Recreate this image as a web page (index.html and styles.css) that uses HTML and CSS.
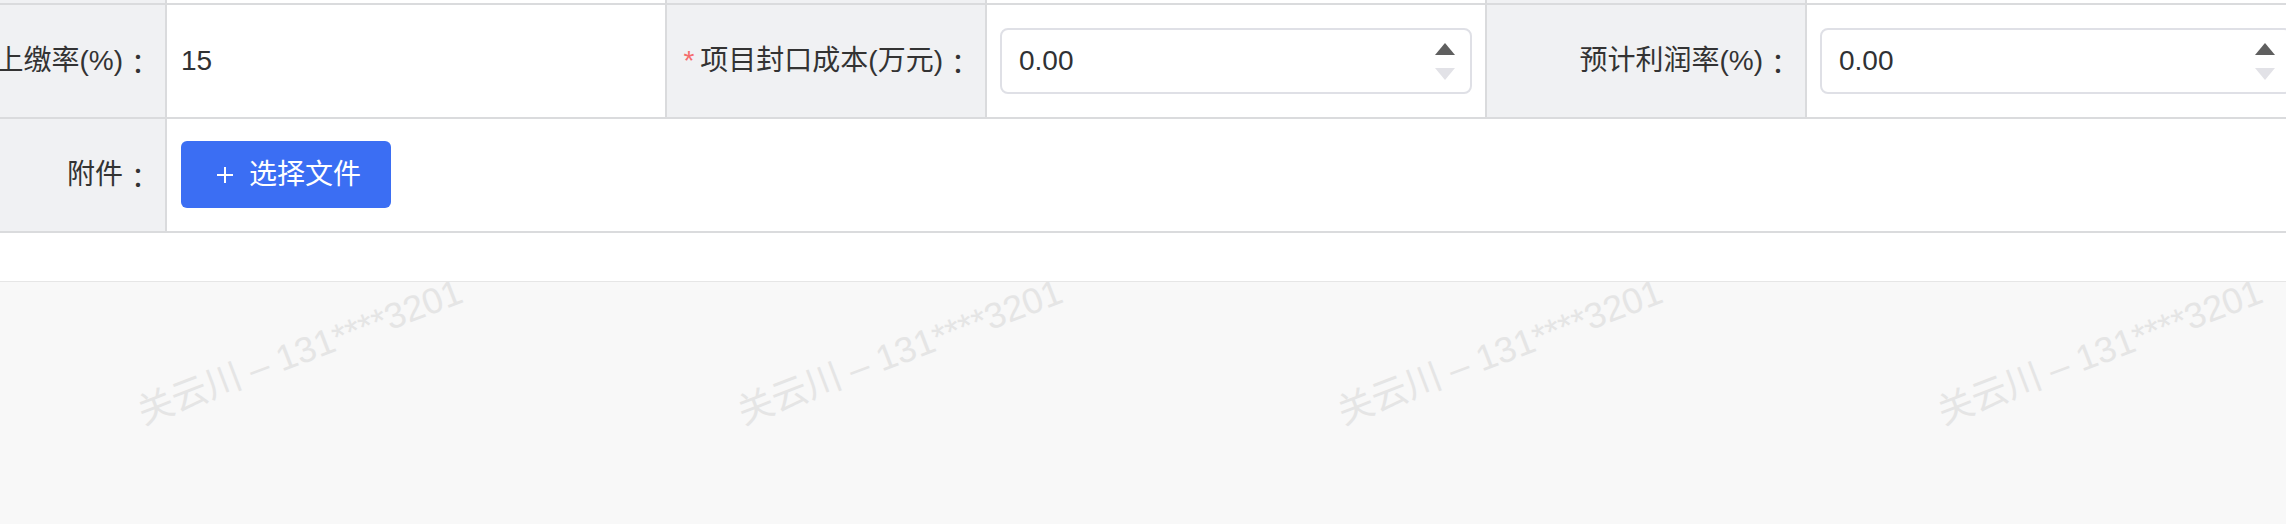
FILE: index.html
```html
<!DOCTYPE html>
<html lang="zh-CN">
<head>
<meta charset="utf-8">
<title>表单</title>
<link rel="stylesheet" href="styles.css">
</head>
<body>
<div class="page">
  <div class="card">
    <div class="grid">
      <div class="cell label"></div>
      <div class="cell value"></div>
      <div class="cell label"></div>
      <div class="cell value"></div>
      <div class="cell label"></div>
      <div class="cell value"></div>

      <div class="cell label">上缴率(%)<span class="colon">：</span></div>
      <div class="cell value"><span class="text">15</span></div>
      <div class="cell label"><span class="req">*</span>项目封口成本(万元)<span class="colon">：</span></div>
      <div class="cell value">
        <div class="num-input">
          <span class="num-val">0.00</span>
          <span class="spin"><span class="up"></span><span class="down"></span></span>
        </div>
      </div>
      <div class="cell label">预计利润率(%)<span class="colon">：</span></div>
      <div class="cell value">
        <div class="num-input">
          <span class="num-val">0.00</span>
          <span class="spin"><span class="up"></span><span class="down"></span></span>
        </div>
      </div>

      <div class="cell label">附件<span class="colon">：</span></div>
      <div class="cell value span5">
        <button class="btn" type="button">
          <svg class="plus" width="18" height="18" viewBox="0 0 18 18"><path d="M9 1V17M1 9H17" stroke="#fff" stroke-width="2" fill="none"/></svg>
          <span>选择文件</span>
        </button>
      </div>
    </div>
  </div>
  <div class="wm-area">
    <span class="wm">关云川 – 131****3201</span>
    <span class="wm">关云川 – 131****3201</span>
    <span class="wm">关云川 – 131****3201</span>
    <span class="wm">关云川 – 131****3201</span>
  </div>
</div>
</body>
</html>
```

FILE: styles.css
```css
html, body {
  margin: 0;
  padding: 0;
}
body {
  width: 2286px;
  height: 524px;
  overflow: hidden;
  background: #f8f8f8;
  font-family: "Liberation Sans", "Noto Sans CJK SC", sans-serif;
  color: #303133;
}
.page {
  display: flex;
  flex-direction: column;
  height: 524px;
}
.card {
  background: #fff;
  padding-bottom: 48px;
  border-bottom: 1px solid #e6e6e6;
  overflow: hidden;
}
.grid {
  display: grid;
  grid-template-columns: 318px 498px 318px 498px 318px 498px;
  grid-template-rows: 3px 112px 112px;
  gap: 2px;
  padding-bottom: 2px;
  margin-left: -153px;
  width: 2458px;
  background: #dadbdd;
}
.cell {
  display: flex;
  align-items: center;
  font-size: 28px;
  line-height: 1;
}
.label {
  background: #f0f1f3;
  justify-content: flex-end;
  padding-right: 6px;
  color: #333;
  white-space: nowrap;
}
.colon {
  font-family: "Noto Sans CJK SC", sans-serif;
  margin-left: 8px;
}
.req {
  color: #f56c6c;
  margin-right: 6px;
  font-size: 28px;
}
.value {
  background: #fff;
  padding: 0 13px 0 14px;
}
.span5 {
  grid-column: 2 / 7;
}
.text {
  color: #303133;
}
.num-input {
  flex: 1;
  height: 66px;
  box-sizing: border-box;
  margin-left: -1px;
  border: 2px solid #dfe0e6;
  border-radius: 8px;
  display: flex;
  align-items: center;
  padding: 0 15px 0 17px;
}
.num-val {
  flex: 1;
  color: #303133;
}
.spin {
  display: flex;
  flex-direction: column;
  gap: 13px;
}
.up {
  width: 0;
  height: 0;
  border-left: 10.5px solid transparent;
  border-right: 10.5px solid transparent;
  border-bottom: 12px solid #5f5f5f;
}
.down {
  width: 0;
  height: 0;
  border-left: 10.5px solid transparent;
  border-right: 10.5px solid transparent;
  border-top: 12px solid #e2e2e7;
}
.btn {
  display: flex;
  align-items: center;
  gap: 15px;
  height: 67px;
  margin-top: -1px;
  padding: 0 30px 0 35px;
  border: 0;
  border-radius: 6px;
  background: #3b6ef3;
  color: #fff;
  font-family: "Liberation Sans", "Noto Sans CJK SC", sans-serif;
  font-size: 28px;
  line-height: 1;
}
.wm-area {
  flex: 1;
  overflow: hidden;
  display: flex;
  align-items: flex-start;
}
.wm {
  flex: 0 0 600px;
  display: flex;
  justify-content: center;
  padding-top: 48px;
  font-size: 36px;
  line-height: 44px;
  color: #e5e5e5;
  white-space: nowrap;
  transform: rotate(-21deg);
  transform-origin: 300px 70px;
}
```
